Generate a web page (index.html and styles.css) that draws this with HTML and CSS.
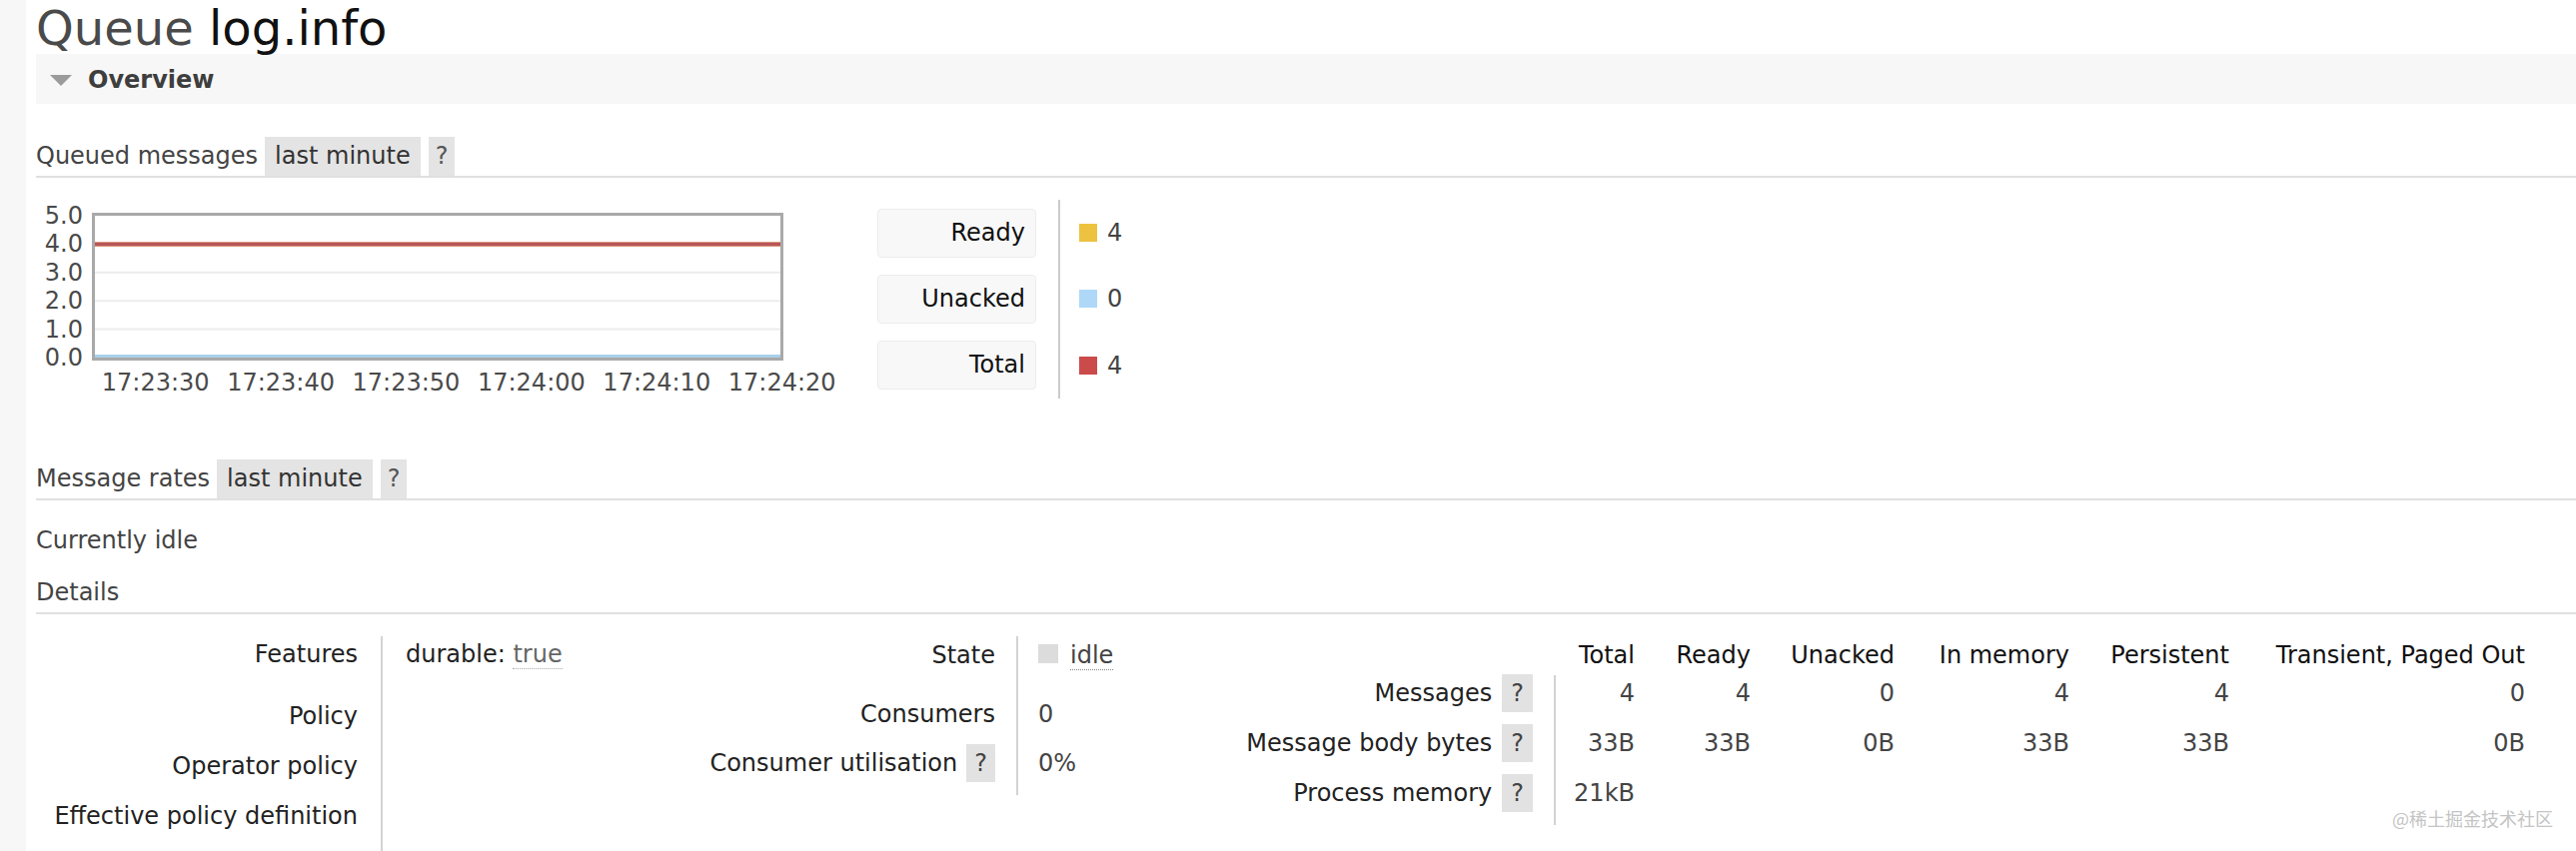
FILE: index.html
```html
<!DOCTYPE html>
<html lang="en">
<head>
<meta charset="utf-8">
<title>Queue log.info</title>
<link rel="stylesheet" href="styles.css">
</head>
<body>
<div class="page">
  <h1 class="title"><span class="title-kind">Queue</span> <span class="title-name">log.info</span></h1>

  <div class="section-bar"><span class="toggle"></span><span class="section-name">Overview</span></div>

  <div class="sub-head sub-head-first">
    <span class="sub-label">Queued messages</span><span class="range">last minute</span><span class="help">?</span>
  </div>

  <div class="chart-row">
    <div class="chart">
      <div class="y-axis">
        <span>5.0</span><span>4.0</span><span>3.0</span><span>2.0</span><span>1.0</span><span>0.0</span>
      </div>
      <div class="plot">
        <svg class="plot-svg" width="686" height="142" viewBox="0 0 686 142">
          <line x1="0" y1="56.8" x2="686" y2="56.8" stroke="#ececec" stroke-width="2"/>
          <line x1="0" y1="85.2" x2="686" y2="85.2" stroke="#ececec" stroke-width="2"/>
          <line x1="0" y1="113.6" x2="686" y2="113.6" stroke="#ececec" stroke-width="2"/>
          <line x1="0" y1="28.4" x2="686" y2="28.4" stroke="#edc240" stroke-width="4"/>
          <line x1="0" y1="28.4" x2="686" y2="28.4" stroke="#b9555b" stroke-width="4"/>
          <line x1="0" y1="140.5" x2="686" y2="140.5" stroke="#a9d0ea" stroke-width="3"/>
        </svg>
      </div>
      <div class="x-axis">
        <span>17:23:30</span><span>17:23:40</span><span>17:23:50</span><span>17:24:00</span><span>17:24:10</span><span>17:24:20</span>
      </div>
    </div>

    <div class="legend">
      <div class="legend-key"><span class="legend-box">Ready</span></div>
      <div class="legend-val"><span class="swatch swatch-ready"></span>4</div>
      <div class="legend-key"><span class="legend-box">Unacked</span></div>
      <div class="legend-val"><span class="swatch swatch-unacked"></span>0</div>
      <div class="legend-key"><span class="legend-box">Total</span></div>
      <div class="legend-val"><span class="swatch swatch-total"></span>4</div>
    </div>
  </div>

  <div class="sub-head sub-head-rates">
    <span class="sub-label">Message rates</span><span class="range">last minute</span><span class="help">?</span>
  </div>

  <p class="idle-note">Currently idle</p>

  <div class="sub-head sub-head-details">
    <span class="sub-label">Details</span>
  </div>

  <div class="details">
    <div class="props">
      <div class="k first">Features</div>
      <div class="v first"><span class="feat">durable:</span> <span class="feat-val">true</span></div>
      <div class="k">Policy</div>
      <div class="v"></div>
      <div class="k">Operator policy</div>
      <div class="v"></div>
      <div class="k">Effective policy definition</div>
      <div class="v"></div>
    </div>

    <div class="status">
      <div class="k first">State</div>
      <div class="v first"><span class="state-swatch"></span><span class="state-val">idle</span></div>
      <div class="k">Consumers</div>
      <div class="v">0</div>
      <div class="k">Consumer utilisation<span class="qmark qmark-tight">?</span></div>
      <div class="v">0%</div>
    </div>

    <div class="counts">
      <div class="ck head"></div>
      <div class="ch head">Total</div>
      <div class="ch head">Ready</div>
      <div class="ch head">Unacked</div>
      <div class="ch head">In memory</div>
      <div class="ch head">Persistent</div>
      <div class="ch head">Transient, Paged Out</div>

      <div class="ck">Messages<span class="qmark">?</span></div>
      <div class="cv cv-first">4</div>
      <div class="cv">4</div>
      <div class="cv">0</div>
      <div class="cv">4</div>
      <div class="cv">4</div>
      <div class="cv">0</div>

      <div class="ck">Message body bytes<span class="qmark">?</span></div>
      <div class="cv cv-first">33B</div>
      <div class="cv">33B</div>
      <div class="cv">0B</div>
      <div class="cv">33B</div>
      <div class="cv">33B</div>
      <div class="cv">0B</div>

      <div class="ck">Process memory<span class="qmark">?</span></div>
      <div class="cv cv-first">21kB</div>
      <div class="cv"></div>
      <div class="cv"></div>
      <div class="cv"></div>
      <div class="cv"></div>
      <div class="cv"></div>
    </div>
  </div>
</div>
<div class="watermark">@稀土掘金技术社区</div>
</body>
</html>
```

FILE: styles.css
```css
* {
  box-sizing: border-box;
}

html,
body {
  margin: 0;
  padding: 0;
}

body {
  position: relative;
  width: 2578px;
  height: 852px;
  overflow: hidden;
  font-family: "DejaVu Sans", Verdana, sans-serif;
  font-size: 24px;
  color: #444;
  background: linear-gradient(to right, #f7f7f7 0, #f7f7f7 26px, #ffffff 26px);
}

.page {
  padding-left: 36px;
}

/* Title */
.title {
  margin: 0;
  height: 54px;
  font-size: 48px;
  font-weight: normal;
  line-height: 56px;
  white-space: nowrap;
}

.title-kind {
  color: #4a4a4a;
}

.title-name {
  color: #111;
}

/* Overview bar */
.section-bar {
  display: flex;
  align-items: center;
  height: 50px;
  padding: 2px 0 0 14px;
  background: #f7f7f7;
  line-height: 48px;
}

.toggle {
  width: 0;
  height: 0;
  border-left: 11px solid transparent;
  border-right: 11px solid transparent;
  border-top: 11px solid #9b9b9b;
  margin-right: 16px;
}

.section-name {
  font-weight: bold;
  color: #3e3e3e;
}

/* Sub headings */
.sub-head {
  display: flex;
  align-items: flex-end;
  height: 41px;
  line-height: 39px;
  border-bottom: 2px solid #e0e0e0;
  white-space: nowrap;
}

.sub-head-first {
  margin-top: 33px;
}

.sub-head-rates {
  margin-top: 61px;
}

.sub-head-details {
  margin-top: 16px;
}

.sub-label {
  margin-right: 7px;
  color: #444;
}

.range {
  background: #e4e4e4;
  padding: 0 10px;
  margin-right: 8px;
  color: #333;
}

.help {
  background: #e4e4e4;
  padding: 0 7px;
  color: #555;
}

/* Chart */
.chart-row {
  display: flex;
  align-items: flex-start;
  gap: 94px;
  margin-top: 22px;
}

.chart {
  display: grid;
  grid-template-columns: 56px 692px;
  grid-template-rows: 161px 37px;
}

.y-axis {
  grid-row: 1;
  grid-column: 1;
  display: flex;
  flex-direction: column;
  padding-top: 2px;
  padding-right: 9px;
  text-align: right;
  color: #4a4a4a;
}

.y-axis span {
  height: 28.4px;
  line-height: 28.4px;
}

.plot {
  grid-row: 1;
  grid-column: 2;
  margin-top: 13px;
  height: 148px;
  border: 3px solid #a9a9a9;
  background: #fff;
}

.plot-svg {
  display: block;
}

.x-axis {
  grid-row: 2;
  grid-column: 2;
  display: flex;
  margin-top: 7px;
  margin-left: 1px;
  line-height: 30px;
  color: #4a4a4a;
  white-space: nowrap;
}

.x-axis span {
  flex: 0 0 125.4px;
  text-align: center;
}

/* Legend */
.legend {
  display: grid;
  grid-template-columns: 181px 140px;
  grid-template-rows: repeat(3, 66.33px);
}

.legend-key {
  display: flex;
  align-items: center;
  padding-right: 22px;
}

.legend-box {
  width: 159px;
  height: 49px;
  padding-right: 10px;
  border: 1px solid #ececec;
  border-radius: 4px;
  background: #f8f8f8;
  line-height: 47px;
  text-align: right;
  color: #111;
}

.legend-val {
  display: flex;
  align-items: center;
  padding-left: 19px;
  border-left: 2px solid #cbcbcb;
  color: #444;
}

.swatch {
  width: 18px;
  height: 18px;
  margin-right: 10px;
}

.swatch-ready {
  background: #edc240;
}

.swatch-unacked {
  background: #afd8f8;
}

.swatch-total {
  background: #cb4b4b;
}

/* Idle note */
.idle-note {
  margin: 23px 0 0;
  line-height: 34px;
  color: #444;
}

/* Details */
.details {
  display: flex;
  align-items: flex-start;
  margin-top: 22px;
  line-height: 34px;
  white-space: nowrap;
}

.props {
  display: grid;
  grid-template-columns: 345px 300px;
  grid-template-rows: 63px 50px 50px 60px;
}

.status {
  display: grid;
  grid-template-columns: 336px 183px;
  grid-template-rows: 61px 49px 49px;
}

.k {
  padding-right: 23px;
  text-align: right;
  color: #222;
}

.status .k {
  padding-right: 21px;
}

.v {
  padding-left: 23px;
  border-left: 2px solid #d3d3d3;
  color: #444;
}

.status .v {
  padding-left: 20px;
}

.props .first {
  padding-top: 1px;
}

.status .first {
  padding-top: 2px;
}

.feat {
  color: #222;
}

.feat-val {
  color: #666;
  border-bottom: 1px dotted #aaa;
}

.state-swatch {
  display: inline-block;
  width: 20px;
  height: 19px;
  margin-right: 12px;
  background: #dcdcdc;
}

.state-val {
  color: #444;
  border-bottom: 1px dotted #888;
}

.qmark {
  display: inline-block;
  margin: -2px 0 -2px 10px;
  padding: 2px 9px;
  background: #e2e2e2;
  color: #444;
  line-height: 34px;
}

.qmark-tight {
  margin-left: 9px;
  padding: 2px 8px;
}

.counts {
  display: grid;
  grid-template-columns: 355px 81px 116px 144px 175px 160px 296px;
  grid-template-rows: 39px 50px 50px 50px;
}

.ck {
  padding-top: 1px;
  padding-right: 21px;
  text-align: right;
  color: #222;
}

.ch {
  text-align: right;
  color: #111;
}

.head {
  padding-top: 2px;
}

.cv {
  padding-top: 1px;
  text-align: right;
  color: #444;
}

.cv-first {
  border-left: 2px solid #d3d3d3;
}

/* Watermark overlay */
.watermark {
  position: absolute;
  right: 23px;
  top: 807px;
  font-family: "Noto Sans CJK SC", sans-serif;
  font-size: 18px;
  line-height: 24px;
  color: #c4c4c4;
}
```
